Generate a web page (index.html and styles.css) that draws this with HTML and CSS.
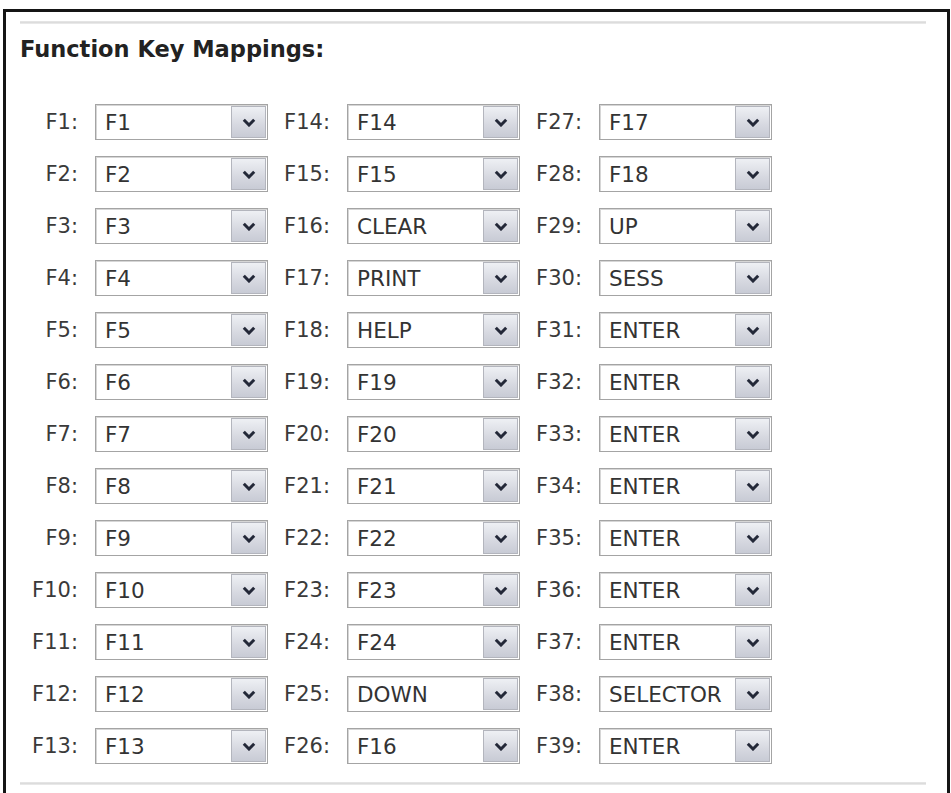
FILE: index.html
```html
<!DOCTYPE html>
<html>
<head>
<meta charset="utf-8">
<link rel="stylesheet" href="styles.css">
</head>
<body>
<div class="frame">
  <div class="rule rule-top"></div>
  <h1 class="title">Function Key Mappings:</h1>
  <div class="grid">
    <div class="col">
      <div class="row"><span class="lbl">F1:</span><div class="combo"><span class="val">F1</span><span class="btn"><svg viewBox="0 0 14 9" width="14" height="9"><path d="M1.8 1.8 L7 7 L12.2 1.8" fill="none" stroke="#232838" stroke-width="3"/></svg></span></div></div>
      <div class="row"><span class="lbl">F2:</span><div class="combo"><span class="val">F2</span><span class="btn"><svg viewBox="0 0 14 9" width="14" height="9"><path d="M1.8 1.8 L7 7 L12.2 1.8" fill="none" stroke="#232838" stroke-width="3"/></svg></span></div></div>
      <div class="row"><span class="lbl">F3:</span><div class="combo"><span class="val">F3</span><span class="btn"><svg viewBox="0 0 14 9" width="14" height="9"><path d="M1.8 1.8 L7 7 L12.2 1.8" fill="none" stroke="#232838" stroke-width="3"/></svg></span></div></div>
      <div class="row"><span class="lbl">F4:</span><div class="combo"><span class="val">F4</span><span class="btn"><svg viewBox="0 0 14 9" width="14" height="9"><path d="M1.8 1.8 L7 7 L12.2 1.8" fill="none" stroke="#232838" stroke-width="3"/></svg></span></div></div>
      <div class="row"><span class="lbl">F5:</span><div class="combo"><span class="val">F5</span><span class="btn"><svg viewBox="0 0 14 9" width="14" height="9"><path d="M1.8 1.8 L7 7 L12.2 1.8" fill="none" stroke="#232838" stroke-width="3"/></svg></span></div></div>
      <div class="row"><span class="lbl">F6:</span><div class="combo"><span class="val">F6</span><span class="btn"><svg viewBox="0 0 14 9" width="14" height="9"><path d="M1.8 1.8 L7 7 L12.2 1.8" fill="none" stroke="#232838" stroke-width="3"/></svg></span></div></div>
      <div class="row"><span class="lbl">F7:</span><div class="combo"><span class="val">F7</span><span class="btn"><svg viewBox="0 0 14 9" width="14" height="9"><path d="M1.8 1.8 L7 7 L12.2 1.8" fill="none" stroke="#232838" stroke-width="3"/></svg></span></div></div>
      <div class="row"><span class="lbl">F8:</span><div class="combo"><span class="val">F8</span><span class="btn"><svg viewBox="0 0 14 9" width="14" height="9"><path d="M1.8 1.8 L7 7 L12.2 1.8" fill="none" stroke="#232838" stroke-width="3"/></svg></span></div></div>
      <div class="row"><span class="lbl">F9:</span><div class="combo"><span class="val">F9</span><span class="btn"><svg viewBox="0 0 14 9" width="14" height="9"><path d="M1.8 1.8 L7 7 L12.2 1.8" fill="none" stroke="#232838" stroke-width="3"/></svg></span></div></div>
      <div class="row"><span class="lbl">F10:</span><div class="combo"><span class="val">F10</span><span class="btn"><svg viewBox="0 0 14 9" width="14" height="9"><path d="M1.8 1.8 L7 7 L12.2 1.8" fill="none" stroke="#232838" stroke-width="3"/></svg></span></div></div>
      <div class="row"><span class="lbl">F11:</span><div class="combo"><span class="val">F11</span><span class="btn"><svg viewBox="0 0 14 9" width="14" height="9"><path d="M1.8 1.8 L7 7 L12.2 1.8" fill="none" stroke="#232838" stroke-width="3"/></svg></span></div></div>
      <div class="row"><span class="lbl">F12:</span><div class="combo"><span class="val">F12</span><span class="btn"><svg viewBox="0 0 14 9" width="14" height="9"><path d="M1.8 1.8 L7 7 L12.2 1.8" fill="none" stroke="#232838" stroke-width="3"/></svg></span></div></div>
      <div class="row"><span class="lbl">F13:</span><div class="combo"><span class="val">F13</span><span class="btn"><svg viewBox="0 0 14 9" width="14" height="9"><path d="M1.8 1.8 L7 7 L12.2 1.8" fill="none" stroke="#232838" stroke-width="3"/></svg></span></div></div>
    </div>
    <div class="col">
      <div class="row"><span class="lbl">F14:</span><div class="combo"><span class="val">F14</span><span class="btn"><svg viewBox="0 0 14 9" width="14" height="9"><path d="M1.8 1.8 L7 7 L12.2 1.8" fill="none" stroke="#232838" stroke-width="3"/></svg></span></div></div>
      <div class="row"><span class="lbl">F15:</span><div class="combo"><span class="val">F15</span><span class="btn"><svg viewBox="0 0 14 9" width="14" height="9"><path d="M1.8 1.8 L7 7 L12.2 1.8" fill="none" stroke="#232838" stroke-width="3"/></svg></span></div></div>
      <div class="row"><span class="lbl">F16:</span><div class="combo"><span class="val">CLEAR</span><span class="btn"><svg viewBox="0 0 14 9" width="14" height="9"><path d="M1.8 1.8 L7 7 L12.2 1.8" fill="none" stroke="#232838" stroke-width="3"/></svg></span></div></div>
      <div class="row"><span class="lbl">F17:</span><div class="combo"><span class="val">PRINT</span><span class="btn"><svg viewBox="0 0 14 9" width="14" height="9"><path d="M1.8 1.8 L7 7 L12.2 1.8" fill="none" stroke="#232838" stroke-width="3"/></svg></span></div></div>
      <div class="row"><span class="lbl">F18:</span><div class="combo"><span class="val">HELP</span><span class="btn"><svg viewBox="0 0 14 9" width="14" height="9"><path d="M1.8 1.8 L7 7 L12.2 1.8" fill="none" stroke="#232838" stroke-width="3"/></svg></span></div></div>
      <div class="row"><span class="lbl">F19:</span><div class="combo"><span class="val">F19</span><span class="btn"><svg viewBox="0 0 14 9" width="14" height="9"><path d="M1.8 1.8 L7 7 L12.2 1.8" fill="none" stroke="#232838" stroke-width="3"/></svg></span></div></div>
      <div class="row"><span class="lbl">F20:</span><div class="combo"><span class="val">F20</span><span class="btn"><svg viewBox="0 0 14 9" width="14" height="9"><path d="M1.8 1.8 L7 7 L12.2 1.8" fill="none" stroke="#232838" stroke-width="3"/></svg></span></div></div>
      <div class="row"><span class="lbl">F21:</span><div class="combo"><span class="val">F21</span><span class="btn"><svg viewBox="0 0 14 9" width="14" height="9"><path d="M1.8 1.8 L7 7 L12.2 1.8" fill="none" stroke="#232838" stroke-width="3"/></svg></span></div></div>
      <div class="row"><span class="lbl">F22:</span><div class="combo"><span class="val">F22</span><span class="btn"><svg viewBox="0 0 14 9" width="14" height="9"><path d="M1.8 1.8 L7 7 L12.2 1.8" fill="none" stroke="#232838" stroke-width="3"/></svg></span></div></div>
      <div class="row"><span class="lbl">F23:</span><div class="combo"><span class="val">F23</span><span class="btn"><svg viewBox="0 0 14 9" width="14" height="9"><path d="M1.8 1.8 L7 7 L12.2 1.8" fill="none" stroke="#232838" stroke-width="3"/></svg></span></div></div>
      <div class="row"><span class="lbl">F24:</span><div class="combo"><span class="val">F24</span><span class="btn"><svg viewBox="0 0 14 9" width="14" height="9"><path d="M1.8 1.8 L7 7 L12.2 1.8" fill="none" stroke="#232838" stroke-width="3"/></svg></span></div></div>
      <div class="row"><span class="lbl">F25:</span><div class="combo"><span class="val">DOWN</span><span class="btn"><svg viewBox="0 0 14 9" width="14" height="9"><path d="M1.8 1.8 L7 7 L12.2 1.8" fill="none" stroke="#232838" stroke-width="3"/></svg></span></div></div>
      <div class="row"><span class="lbl">F26:</span><div class="combo"><span class="val">F16</span><span class="btn"><svg viewBox="0 0 14 9" width="14" height="9"><path d="M1.8 1.8 L7 7 L12.2 1.8" fill="none" stroke="#232838" stroke-width="3"/></svg></span></div></div>
    </div>
    <div class="col">
      <div class="row"><span class="lbl">F27:</span><div class="combo"><span class="val">F17</span><span class="btn"><svg viewBox="0 0 14 9" width="14" height="9"><path d="M1.8 1.8 L7 7 L12.2 1.8" fill="none" stroke="#232838" stroke-width="3"/></svg></span></div></div>
      <div class="row"><span class="lbl">F28:</span><div class="combo"><span class="val">F18</span><span class="btn"><svg viewBox="0 0 14 9" width="14" height="9"><path d="M1.8 1.8 L7 7 L12.2 1.8" fill="none" stroke="#232838" stroke-width="3"/></svg></span></div></div>
      <div class="row"><span class="lbl">F29:</span><div class="combo"><span class="val">UP</span><span class="btn"><svg viewBox="0 0 14 9" width="14" height="9"><path d="M1.8 1.8 L7 7 L12.2 1.8" fill="none" stroke="#232838" stroke-width="3"/></svg></span></div></div>
      <div class="row"><span class="lbl">F30:</span><div class="combo"><span class="val">SESS</span><span class="btn"><svg viewBox="0 0 14 9" width="14" height="9"><path d="M1.8 1.8 L7 7 L12.2 1.8" fill="none" stroke="#232838" stroke-width="3"/></svg></span></div></div>
      <div class="row"><span class="lbl">F31:</span><div class="combo"><span class="val">ENTER</span><span class="btn"><svg viewBox="0 0 14 9" width="14" height="9"><path d="M1.8 1.8 L7 7 L12.2 1.8" fill="none" stroke="#232838" stroke-width="3"/></svg></span></div></div>
      <div class="row"><span class="lbl">F32:</span><div class="combo"><span class="val">ENTER</span><span class="btn"><svg viewBox="0 0 14 9" width="14" height="9"><path d="M1.8 1.8 L7 7 L12.2 1.8" fill="none" stroke="#232838" stroke-width="3"/></svg></span></div></div>
      <div class="row"><span class="lbl">F33:</span><div class="combo"><span class="val">ENTER</span><span class="btn"><svg viewBox="0 0 14 9" width="14" height="9"><path d="M1.8 1.8 L7 7 L12.2 1.8" fill="none" stroke="#232838" stroke-width="3"/></svg></span></div></div>
      <div class="row"><span class="lbl">F34:</span><div class="combo"><span class="val">ENTER</span><span class="btn"><svg viewBox="0 0 14 9" width="14" height="9"><path d="M1.8 1.8 L7 7 L12.2 1.8" fill="none" stroke="#232838" stroke-width="3"/></svg></span></div></div>
      <div class="row"><span class="lbl">F35:</span><div class="combo"><span class="val">ENTER</span><span class="btn"><svg viewBox="0 0 14 9" width="14" height="9"><path d="M1.8 1.8 L7 7 L12.2 1.8" fill="none" stroke="#232838" stroke-width="3"/></svg></span></div></div>
      <div class="row"><span class="lbl">F36:</span><div class="combo"><span class="val">ENTER</span><span class="btn"><svg viewBox="0 0 14 9" width="14" height="9"><path d="M1.8 1.8 L7 7 L12.2 1.8" fill="none" stroke="#232838" stroke-width="3"/></svg></span></div></div>
      <div class="row"><span class="lbl">F37:</span><div class="combo"><span class="val">ENTER</span><span class="btn"><svg viewBox="0 0 14 9" width="14" height="9"><path d="M1.8 1.8 L7 7 L12.2 1.8" fill="none" stroke="#232838" stroke-width="3"/></svg></span></div></div>
      <div class="row"><span class="lbl">F38:</span><div class="combo"><span class="val">SELECTOR</span><span class="btn"><svg viewBox="0 0 14 9" width="14" height="9"><path d="M1.8 1.8 L7 7 L12.2 1.8" fill="none" stroke="#232838" stroke-width="3"/></svg></span></div></div>
      <div class="row"><span class="lbl">F39:</span><div class="combo"><span class="val">ENTER</span><span class="btn"><svg viewBox="0 0 14 9" width="14" height="9"><path d="M1.8 1.8 L7 7 L12.2 1.8" fill="none" stroke="#232838" stroke-width="3"/></svg></span></div></div>
    </div>
  </div>
  <div class="rule rule-bottom"></div>
</div>
</body>
</html>
```

FILE: styles.css
```css
html, body {
  margin: 0;
  padding: 0;
  background: #ffffff;
}

body {
  font-family: "DejaVu Sans", Verdana, sans-serif;
  color: #333;
  overflow: hidden;
}

.frame {
  margin: 9px 0 0 3px;
  width: 941px;
  height: 800px;
  border: 3px solid #151515;
  border-bottom: none;
  background: #fff;
}

.rule {
  height: 3px;
  width: 906px;
  margin-left: 14px;
  background: linear-gradient(#e8e8e8, #dcdcdc 50%, #eeeeee);
}

.rule-top {
  margin-top: 9px;
}

.rule-bottom {
  margin-top: 18px;
}

.title {
  margin: 12px 0 0 14px;
  font-size: 22.5px;
  line-height: 26px;
  font-weight: bold;
  color: #222;
}

.grid {
  display: flex;
  margin: 42px 0 0 10px;
}

.col {
  display: flex;
  flex-direction: column;
  gap: 16px;
  width: 252px;
}

.row {
  display: grid;
  grid-template-columns: 62px 173px;
  column-gap: 17px;
  height: 36px;
  align-items: center;
}

.lbl {
  text-align: right;
  font-size: 21px;
  color: #3a3a3a;
}

.combo {
  box-sizing: border-box;
  height: 36px;
  display: flex;
  align-items: stretch;
  border: 1px solid #a4a4a4;
  box-shadow: inset 1px 1px 0 #d6d6d6;
  background: #fff;
}

.val {
  flex: 1;
  display: flex;
  align-items: center;
  padding-left: 9px;
  font-size: 21.5px;
  color: #333;
  white-space: nowrap;
  overflow: hidden;
}

.btn {
  width: 33px;
  margin: 1px;
  border: 1px solid #b3b5bd;
  background: linear-gradient(#eef0f4, #d6d8e0 60%, #c8cbd5);
  display: flex;
  align-items: center;
  justify-content: center;
}
```
